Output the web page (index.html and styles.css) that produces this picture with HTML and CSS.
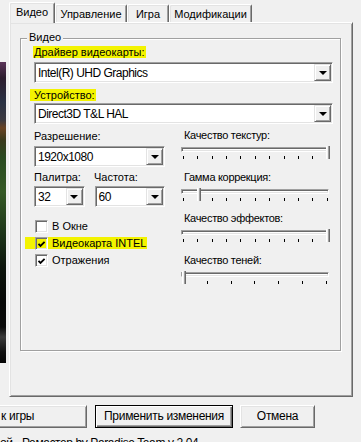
FILE: index.html
```html
<!DOCTYPE html>
<html lang="ru">
<head>
    <meta charset="UTF-8">
    <title>Настройки</title>
    <link rel="stylesheet" href="styles.css">
</head>
<body>
    <div class="window">
        <div class="top">
            <div class="art-col"><div class="art"></div></div>

            <div class="tabs">
                <div class="tab-strip">
                    <div class="tab active">Видео</div>
                    <div class="tab tab-control">Управление</div>
                    <div class="tab tab-game">Игра</div>
                    <div class="tab tab-mods">Модификации</div>
                </div>

                <div class="panel">
                    <div class="group">
                        <div class="legend">Видео</div>

                        <div class="field-label first"><span class="mark mark-driver">Драйвер видеокарты:</span></div>
                        <div class="combo wide"><span class="combo-text">Intel(R) UHD Graphics</span><span class="drop"></span></div>

                        <div class="field-label second"><span class="mark mark-device">Устройство:</span></div>
                        <div class="combo wide tight"><span class="combo-text">Direct3D T&amp;L HAL</span><span class="drop"></span></div>

                        <div class="cols">
                            <div class="col-left">
                                <div class="label">Разрешение:</div>
                                <div class="combo res"><span class="combo-text">1920x1080</span><span class="drop"></span></div>

                                <div class="pair-labels">
                                    <div class="label pal">Палитра:</div>
                                    <div class="label">Частота:</div>
                                </div>
                                <div class="pair">
                                    <div class="combo pal-combo"><span class="combo-text">32</span><span class="drop"></span></div>
                                    <div class="combo freq-combo"><span class="combo-text">60</span><span class="drop"></span></div>
                                </div>

                                <div class="checks">
                                    <div class="check-row"><span class="box"></span>В Окне</div>
                                    <div class="check-row mark mark-check"><span class="box"><svg viewBox="0 0 9 9" width="9" height="9"><path d="M1.5 3.8 L3.5 5.9 L7.6 1.8" fill="none" stroke="#000" stroke-width="1.8"/></svg></span>Видеокарта INTEL</div>
                                    <div class="check-row"><span class="box"><svg viewBox="0 0 9 9" width="9" height="9"><path d="M1.5 3.8 L3.5 5.9 L7.6 1.8" fill="none" stroke="#000" stroke-width="1.8"/></svg></span>Отражения</div>
                                </div>
                            </div>

                            <div class="col-right">
                                <div class="slider">
                                    <div class="slider-label">Качество текстур:</div>
                                    <div class="track"><span class="thumb" style="left: 144px"></span></div>
                                    <div class="ticks">
                                        <i></i><i></i><i></i><i></i><i></i><i></i><i></i><i></i><i></i><i></i><i class="end"></i>
                                    </div>
                                </div>
                                <div class="slider">
                                    <div class="slider-label">Гамма коррекция:</div>
                                    <div class="track"><span class="thumb" style="left: 15px"></span></div>
                                    <div class="ticks">
                                        <i></i><i></i><i></i><i></i><i></i><i></i><i></i><i></i><i></i><i></i><i class="end"></i>
                                    </div>
                                </div>
                                <div class="slider">
                                    <div class="slider-label">Качество эффектов:</div>
                                    <div class="track"><span class="thumb" style="left: 144px"></span></div>
                                    <div class="ticks">
                                        <i></i><i></i><i></i><i></i><i></i><i></i><i></i><i></i><i></i><i></i><i class="end"></i>
                                    </div>
                                </div>
                                <div class="slider">
                                    <div class="slider-label">Качество теней:</div>
                                    <div class="track"><span class="thumb" style="left: 0px"></span></div>
                                    <div class="ticks spread">
                                        <i></i><i></i><i></i><i></i><i></i><i></i><i></i>
                                    </div>
                                </div>
                            </div>
                        </div>
                    </div>
                </div>
            </div>
        </div>

        <div class="buttons">
            <div class="btn btn-start">к игры</div>
            <div class="btn btn-apply">Применить изменения</div>
            <div class="btn btn-cancel">Отмена</div>
        </div>

        <div class="footer">ой - Ремастер by Paradise Team v 2.04</div>
    </div>
</body>
</html>
```

FILE: styles.css
```css
* {
    margin: 0;
    padding: 0;
    box-sizing: border-box;
}

body {
    background: #f0f0f0;
    color: #000;
    font-family: 'Liberation Sans', Arial, sans-serif;
    font-size: 11px;
    line-height: 13px;
    width: 361px;
    height: 442px;
    overflow: hidden;
}

.top {
    display: flex;
}

/* game artwork peeking out on the left */
.art-col {
    width: 9px;
    flex: none;
}

.art {
    width: 6px;
    height: 301px;
    margin-top: 62px;
    background: linear-gradient(to bottom,
        #5a3458 0px, #2c1d2e 16px, #2a3244 40px, #3c3a40 58px,
        #6a4424 66px, #3a3a1c 78px, #2a4a20 95px, #365a26 130px,
        #1c3218 175px, #0e160c 205px, #070807 240px, #0a0a0a 265px,
        #3a3a3a 275px, #111 290px, #050505 301px);
}

.tabs {
    width: 344px;
    flex: none;
}

.tab-strip {
    display: flex;
    align-items: flex-end;
    height: 22px;
    position: relative;
    z-index: 1;
}

.tab {
    height: 18px;
    padding-top: 3px;
    text-align: center;
    background: #f0f0f0;
    border-top: 1px solid #fff;
    border-left: 1px solid #fff;
    border-right: 1px solid #696969;
    box-shadow: inset 1px 1px 0 #e3e3e3, inset -1px 0 0 #a0a0a0;
    border-radius: 2px 2px 0 0;
}

.tab.active {
    width: 46px;
    height: 21px;
    margin-bottom: -1px;
    padding-top: 3px;
}

.tab-control {
    width: 72px;
}

.tab-game {
    width: 42px;
}

.tab-mods {
    width: 83px;
}

.panel {
    height: 375px;
    border: 1px solid;
    border-color: #fff #696969 #696969 #fff;
    box-shadow: inset 1px 1px 0 #e3e3e3, inset -1px -1px 0 #a0a0a0;
    padding: 15px 0 0 10px;
}

/* etched group box */
.group {
    position: relative;
    width: 321px;
    height: 313px;
    border: 1px solid #a0a0a0;
    box-shadow: 1px 1px 0 #fff, inset 1px 1px 0 #fff;
    padding: 7px 0 0 13px;
}

.legend {
    position: absolute;
    top: -8px;
    left: 6px;
    padding: 0 2px;
    background: #f0f0f0;
}

.mark {
    background: #f3f300;
}

.field-label {
    display: flex;
    height: 12px;
    line-height: 12px;
}

.field-label.second {
    margin-top: 6px;
}

.mark-driver {
    margin-left: -1px;
    padding: 0 1px;
}

.mark-device {
    margin-left: -4px;
    padding: 0 1px 0 4px;
}

.combo {
    display: flex;
    align-items: center;
    justify-content: space-between;
    height: 21px;
    background: #fff;
    border: 1px solid;
    border-color: #a0a0a0 #fff #fff #a0a0a0;
    box-shadow: inset 1px 1px 0 #696969, inset -1px -1px 0 #e3e3e3;
    padding: 1px 1px 1px 3px;
    margin-top: 4px;
}

.combo.wide {
    width: 299px;
}

.combo.tight {
    margin-top: 2px;
}

.combo-text {
    font-size: 12px;
    letter-spacing: -0.5px;
    padding-top: 1px;
}

.drop {
    position: relative;
    width: 17px;
    height: 17px;
    background: #f0f0f0;
    border: 1px solid;
    border-color: #e3e3e3 #696969 #696969 #e3e3e3;
    box-shadow: inset 1px 1px 0 #fff, inset -1px -1px 0 #a0a0a0;
    display: flex;
    align-items: center;
    justify-content: center;
}

.drop::after {
    content: '';
    border-left: 4px solid transparent;
    border-right: 4px solid transparent;
    border-top: 4px solid #000;
    margin-top: 1px;
}

.cols {
    display: flex;
    gap: 16px;
}

.col-left {
    width: 131px;
    padding-top: 6px;
}

.combo.res {
    margin-top: 3px;
}

.pair-labels {
    display: flex;
    margin-top: 4px;
}

.label.pal {
    width: 60px;
}

.pair {
    display: flex;
    gap: 10px;
}

.pair .combo {
    margin-top: 2px;
}

.pal-combo {
    width: 51px;
}

.freq-combo {
    width: 71px;
}

.checks {
    display: flex;
    flex-direction: column;
    align-items: flex-start;
    gap: 5px;
    margin-top: 13px;
}

.check-row {
    display: flex;
    align-items: center;
    height: 13px;
    gap: 4px;
    white-space: nowrap;
}

.box {
    flex: none;
    width: 13px;
    height: 13px;
    margin-left: 1px;
    background: #fff;
    border: 1px solid;
    border-color: #a0a0a0 #fff #fff #a0a0a0;
    box-shadow: inset 1px 1px 0 #696969, inset -1px -1px 0 #e3e3e3;
    padding: 1px;
}

.box svg {
    display: block;
    margin: 1px 0 0 0;
}

.mark-check {
    margin-left: -9px;
    padding: 0 1px 0 9px;
    height: 12px;
    margin-top: -1px;
}

.mark-check .box {
    background: transparent;
}

.col-right {
    width: 148px;
    padding-top: 5px;
}

.slider {
    margin-bottom: 11.5px;
}

.slider-label {
    padding-left: 3px;
    letter-spacing: -0.3px;
}

.track {
    position: relative;
    height: 5px;
    margin-top: 5px;
    background: #fff;
    border: 1px solid;
    border-color: #a0a0a0 #fff #fff #a0a0a0;
    box-shadow: inset 1px 1px 0 #696969, inset -1px -1px 0 #e3e3e3;
}

.thumb {
    position: absolute;
    top: -2px;
    width: 4px;
    height: 13px;
    background: #f0f0f0;
    border-left: 1px solid #fff;
    border-right: 1px solid #696969;
    box-shadow: inset -1px 0 0 #a0a0a0;
}

.ticks {
    display: flex;
    gap: 14px;
    width: 144px;
    height: 3px;
    margin: 4px 0 0 2px;
}

.ticks i {
    display: block;
    width: 1px;
    height: 3px;
    background: #000;
}

.ticks i.end {
    margin-left: auto;
}

.ticks.spread {
    gap: 0;
    justify-content: space-between;
}

.buttons {
    display: flex;
    margin-top: 8px;
}

.btn {
    height: 23px;
    display: flex;
    align-items: center;
    justify-content: center;
    font-size: 12px;
    letter-spacing: -0.3px;
    border: 1px solid;
    border-color: #fff #696969 #696969 #fff;
    box-shadow: inset 1px 1px 0 #e3e3e3, inset -1px -1px 0 #a0a0a0;
}

.btn-start {
    width: 97px;
    margin-left: -10px;
    justify-content: flex-start;
    padding-left: 10px;
}

.btn-apply {
    width: 138px;
    margin-left: 8px;
    border-color: #000;
    box-shadow: inset 1px 1px 0 #fff, inset -1px -1px 0 #696969, inset -2px -2px 0 #a0a0a0;
}

.btn-cancel {
    width: 75px;
    margin-left: 7px;
}

.footer {
    margin-top: 9px;
    font-size: 12px;
    letter-spacing: -0.4px;
    white-space: nowrap;
}
```
